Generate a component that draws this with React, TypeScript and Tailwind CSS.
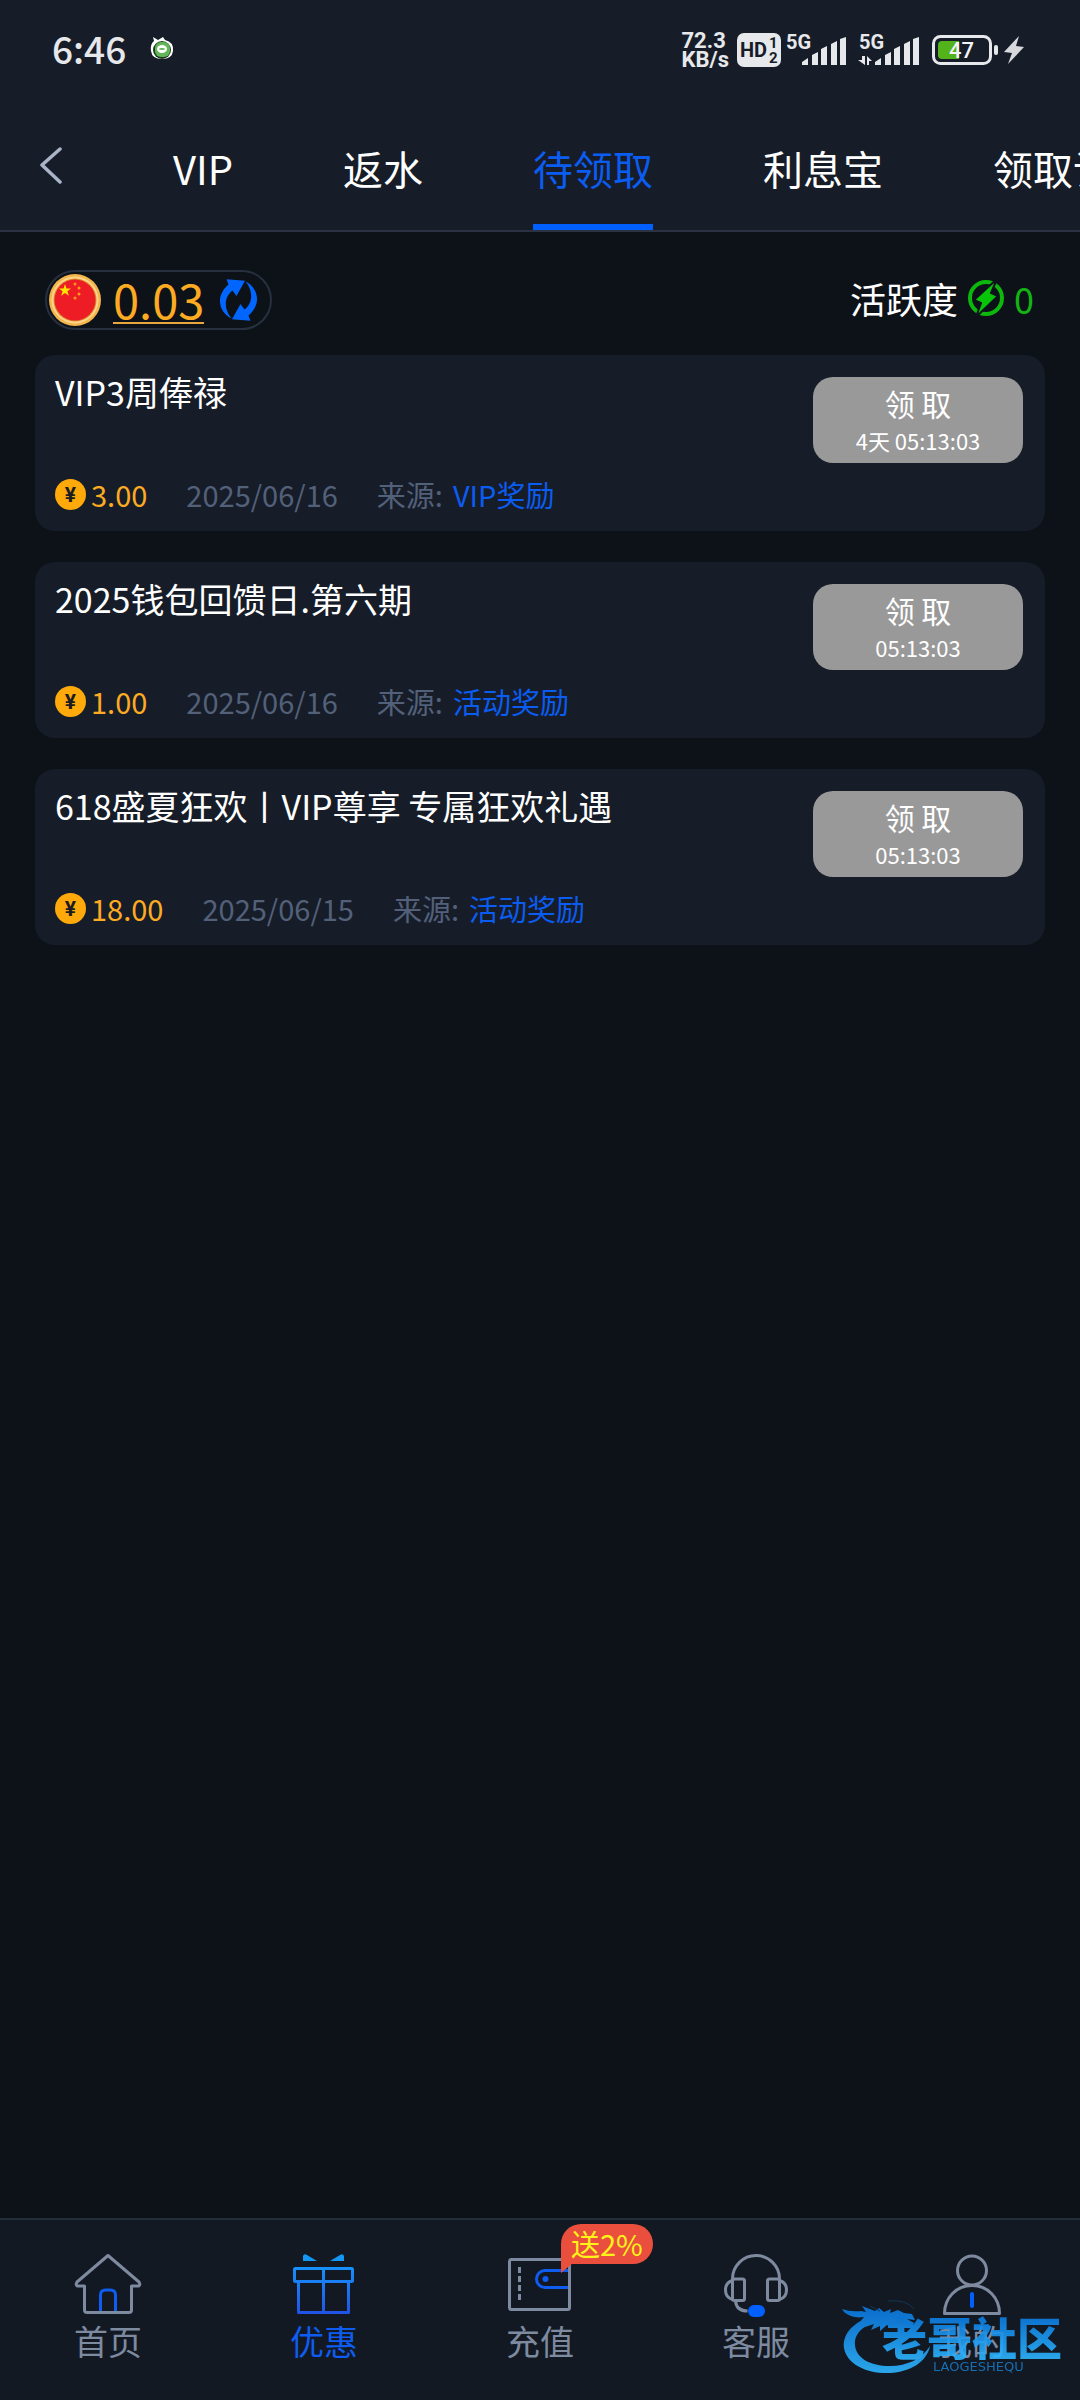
import React from 'react';

interface Reward {
  title: string;
  amount: string;
  date: string;
  source: string;
  countdown: string;
}

interface NavItem {
  label: string;
  icon: React.ReactNode;
  active?: boolean;
  badge?: string;
}

const tabs = ['VIP', '返水', '待领取', '利息宝', '领取记录'];
const activeTab = '待领取';

const rewards: Reward[] = [
  { title: 'VIP3周俸禄', amount: '3.00', date: '2025/06/16', source: 'VIP奖励', countdown: '4天 05:13:03' },
  { title: '2025钱包回馈日.第六期', amount: '1.00', date: '2025/06/16', source: '活动奖励', countdown: '05:13:03' },
  { title: '618盛夏狂欢丨VIP尊享 专属狂欢礼遇', amount: '18.00', date: '2025/06/15', source: '活动奖励', countdown: '05:13:03' },
];

const HdIcon: React.FC = () => (
  <svg className="w-11 h-[34px]" viewBox="0 0 44 34">
    <rect x="0" y="0" width="44" height="34" rx="7" fill="#e6e8eb" />
    <g fill="#171d28" fontFamily="Roboto, sans-serif" fontWeight="700">
      <text x="3" y="24" fontSize="20">HD</text>
      <text x="32" y="15" fontSize="15">1</text>
      <text x="32" y="30" fontSize="15">2</text>
    </g>
  </svg>
);

const SignalIcon: React.FC<{ data?: boolean }> = ({ data }) => (
  <svg className="w-[62px] h-8 overflow-visible" viewBox="0 0 62 32" fill="#e6e8eb">
    <text x="1" y="15" fontSize="20" fontFamily="Roboto, sans-serif" fontWeight="700">5G</text>
    {data && <path d="M4 22h3v9L0 26h4zM9 31V22l5 5h-3v4z" />}
    <path d="M17 31v-3l6-4v7z" />
    <path d="M27 31V21l6-3v13z" />
    <path d="M36 31V15l6-3v19z" />
    <path d="M46 31V10l6-3v24z" />
    <path d="M55 31V5l6-2v28z" />
  </svg>
);

const BatteryIcon: React.FC = () => (
  <svg className="w-[66px] h-[30px]" viewBox="0 0 66 30">
    <rect x="1.5" y="1.5" width="57" height="27" rx="7" fill="none" stroke="#e6e8eb" strokeWidth="3" />
    <path d="M10 6h17v18H10a4 4 0 0 1-4-4V10a4 4 0 0 1 4-4z" fill="#52b41a" />
    <rect x="62" y="10" width="4" height="10" rx="2" fill="#e6e8eb" />
    <text x="17" y="23" fontSize="22" fontFamily="Roboto, sans-serif" fontWeight="500" fill="#f3f4f6">47</text>
  </svg>
);

const StatusBar: React.FC = () => (
  <div className="flex items-center justify-between h-[100px] pl-[52px] pr-14">
    <div className="flex items-center gap-6 pb-1 text-[#e6e8eb]">
      <span className="text-[37px] leading-none font-medium">6:46</span>
      <svg className="w-6 h-6" viewBox="0 0 24 24">
        <path d="M3 1l5 3 5-3 2 3q9 2 8 11-1 8-11 8T1 15Q0 8 4 5z" fill="#fff" />
        <circle cx="12" cy="14" r="9" fill="#1f3b22" />
        <rect x="5" y="6" width="15" height="15" rx="6" fill="#62b558" />
        <ellipse cx="12" cy="13" rx="5" ry="4" fill="#fff" />
        <ellipse cx="12" cy="13" rx="3" ry="1" fill="#62b558" />
      </svg>
    </div>
    <div className="flex items-center text-[#e6e8eb]">
      <div className="mr-2 font-[Roboto,sans-serif] text-[22px] leading-[19px] font-bold">
        <div>72.3</div>
        <div>KB/s</div>
      </div>
      <HdIcon />
      <div className="flex gap-[11px] ml-1 mr-3">
        <SignalIcon />
        <SignalIcon data />
      </div>
      <BatteryIcon />
      <svg className="w-5 h-7 ml-1.5" viewBox="0 0 20 28" fill="#d6d8dc">
        <path d="M15 0L0 16l8 1-4 11L20 11l-8-1z" />
      </svg>
    </div>
  </div>
);

const Header: React.FC = () => (
  <header className="bg-[#171d28] border-b-2 border-[#2a3244]">
    <StatusBar />
    <div className="flex items-center h-[130px] pl-10 overflow-hidden">
      <button type="button" aria-label="返回" className="shrink-0">
        <svg className="w-6 h-10" viewBox="0 0 24 40" fill="none" stroke="#a9b4c8" strokeWidth="3.5" strokeLinecap="round" strokeLinejoin="round">
          <path d="M20 4L2 20l18 17" />
        </svg>
      </button>
      <nav className="flex gap-[110px] h-full ml-[109px]">
        {tabs.map((tab) => (
          <button
            key={tab}
            type="button"
            className={
              tab === activeTab
                ? 'shrink-0 h-full pt-3 whitespace-nowrap text-[40px] border-b-6 border-[#0060ff] text-[#0b5cf0]'
                : 'shrink-0 h-full pt-3 whitespace-nowrap text-[40px] border-b-6 border-transparent text-white'
            }
          >
            {tab}
          </button>
        ))}
      </nav>
    </div>
  </header>
);

const FlagCoin: React.FC = () => (
  <svg className="w-[52px] h-[52px]" viewBox="0 0 52 52">
    <circle cx="26" cy="26" r="26" fill="#f3b64c" />
    <circle cx="26" cy="26" r="23.5" fill="#fdd58a" />
    <circle cx="26" cy="26" r="21.5" fill="#d98a2b" />
    <circle cx="26" cy="26" r="20.5" fill="#ee1c25" />
    <path d="M16 10l1.500 4.500h4.500l-3.600 2.800 1.400 4.500-3.800-2.800-3.800 2.800 1.400-4.500-3.600-2.800h4.500z" fill="#ffe500" />
    <g fill="#ff9a1f">
      <circle cx="26" cy="10" r="1.500" />
      <circle cx="30" cy="14" r="1.500" />
      <circle cx="30" cy="20" r="1.500" />
      <circle cx="26" cy="24" r="1.500" />
    </g>
  </svg>
);

const refreshArrow = 'M8.600 .3L27 1.700 18.500 17l-4-5.500C6 18 5.500 30 13.500 39.500 2 34-4 18 10.500 5.500z';

const Balance: React.FC = () => (
  <div className="flex items-center justify-between pl-[45px] pr-[46px] pt-[38px] pb-[25px]">
    <div className="flex items-center h-[60px] pl-0.5 pr-2.5 rounded-full border-2 border-[#27303f]">
      <FlagCoin />
      <a href="#balance" className="ml-3 text-[47px] leading-[46px] text-[#fcab22] border-b-2 border-[#e8a63c]">0.03</a>
      <button type="button" aria-label="刷新" className="ml-3.5">
        <svg className="w-[42px] h-[42px]" viewBox="0 0 42 42" fill="#0066ff">
          <path d={refreshArrow} />
          <path d={refreshArrow} transform="rotate(180 20.500 21)" />
        </svg>
      </button>
    </div>
    <div className="flex items-center gap-2.5 pb-1 text-4xl text-white">
      <span>活跃度</span>
      <svg className="w-9 h-9 overflow-visible" viewBox="0 0 36 36">
        <circle cx="18" cy="18" r="16" fill="none" stroke="#0bb80b" strokeWidth="4" />
        <path d="M29-1L6 20l7 3-5 14 22-21-7-3z" fill="#08c408" stroke="#0e131b" strokeWidth="2" />
      </svg>
      <span className="text-[#14b314]">0</span>
    </div>
  </div>
);

const RewardCard: React.FC<{ reward: Reward }> = ({ reward }) => (
  <li className="flex justify-between h-44 pl-5 pr-[22px] rounded-[20px] bg-[#161d28]">
    <div className="flex flex-col justify-between pt-3.5 pb-[18px]">
      <h2 className="text-[34px] leading-[46px] text-white">{reward.title}</h2>
      <div className="flex items-center text-[29px] leading-[38px]">
        <svg className="w-[31px] h-[31px]" viewBox="0 0 31 31">
          <circle cx="15.500" cy="15.500" r="15.500" fill="#ffa90a" />
          <text x="15.500" y="23" textAnchor="middle" fontSize="21" fontFamily="Roboto, sans-serif" fontWeight="700" fill="#1b1d20">¥</text>
        </svg>
        <span className="ml-[5px] text-[#fcab22]">{reward.amount}</span>
        <time className="ml-[39px] text-[#53607a]">{reward.date}</time>
        <span className="ml-[39px] text-[#53607a]">来源:</span>
        <a href="#source" className="ml-2.5 text-[#0b5cf0]">{reward.source}</a>
      </div>
    </div>
    <button type="button" className="flex flex-col items-center justify-center w-[210px] h-[86px] mt-[22px] rounded-[20px] bg-[#999999] text-white">
      <span className="text-[30px] leading-[40px]">领 取</span>
      <span className="text-[22px] leading-[34px]">{reward.countdown}</span>
    </button>
  </li>
);

const HomeIcon: React.FC = () => (
  <svg className="w-[72px] h-[66px]" viewBox="0 0 72 66" fill="none" stroke="#7e8aa0" strokeWidth="3" strokeLinejoin="round">
    <path d="M36 3.500L5 30q-2 4 1 4h6.500v24q0 2.500 2.500 2.500h42q2.500 0 2.500-2.500V34H66q3 0 1-4z" />
    <path d="M28.500 59V43q0-5 5-5h5q5 0 5 5v16" stroke="#0f5cf0" />
  </svg>
);

const GiftIcon: React.FC = () => (
  <svg className="w-[72px] h-[66px]" viewBox="0 0 72 66" fill="none" strokeWidth="3" strokeLinejoin="round">
    <defs>
      <linearGradient id="gift" gradientUnits="userSpaceOnUse" x1="0" y1="4" x2="0" y2="62">
        <stop offset="0" stopColor="#14a0ff" />
        <stop offset="1" stopColor="#2152e6" />
      </linearGradient>
    </defs>
    <g stroke="url(#gift)">
      <rect x="6.500" y="16.500" width="58" height="13" rx="1" />
      <path d="M10.500 29.500v31h50v-31M35.500 16.500v44" />
    </g>
    <path d="M15 9V4q1-3 4-1l10 6zM56 9V4q-1-3-4-1L42 9z" fill="#1496f5" />
  </svg>
);

const WalletIcon: React.FC = () => (
  <svg className="w-[72px] h-[66px]" viewBox="0 0 72 66" fill="none" stroke="#7e8aa0" strokeWidth="3" strokeLinejoin="round">
    <path d="M64 18.500H41a8.500 8.500 0 0 0 0 17h23" stroke="#0f5cf0" />
    <rect x="5.500" y="7.500" width="60" height="50" rx="2" />
    <path d="M15.500 15v34" strokeDasharray="6 3" />
    <circle cx="41.500" cy="27" r="3" fill="#0f5cf0" stroke="none" />
  </svg>
);

const HeadsetIcon: React.FC = () => (
  <svg className="w-[72px] h-[66px]" viewBox="0 0 72 66" fill="none" stroke="#7e8aa0" strokeWidth="3">
    <path d="M12.500 30v-3a23.500 23.500 0 0 1 47 0v3" />
    <rect x="12.500" y="27" width="12" height="21.500" rx="2" />
    <rect x="47.500" y="27" width="12" height="21.500" rx="2" />
    <path d="M12.500 28.500q-7 2-7 9.500t7 9.500M59.500 28.500q7 2 7 9.500t-7 9.500M15.500 49q1 10 12 10" />
    <rect x="28" y="53" width="17" height="12" rx="6" fill="#0060ff" stroke="none" />
  </svg>
);

const UserIcon: React.FC = () => (
  <svg className="w-[72px] h-[66px]" viewBox="0 0 72 66" fill="none" stroke="#7e8aa0" strokeWidth="3" strokeLinejoin="round">
    <circle cx="36" cy="18.500" r="14.500" />
    <path d="M8.500 61.500C8.500 46 20 33.500 36 33.500S63.500 46 63.500 61.500z" />
    <path d="M36 42v12" stroke="#0060ff" strokeWidth="4" strokeLinecap="round" />
  </svg>
);

const navItems: NavItem[] = [
  { label: '首页', icon: <HomeIcon /> },
  { label: '优惠', icon: <GiftIcon />, active: true },
  { label: '充值', icon: <WalletIcon />, badge: '送2%' },
  { label: '客服', icon: <HeadsetIcon /> },
  { label: '我的', icon: <UserIcon /> },
];

const Watermark: React.FC = () => (
  <div className="absolute right-4 bottom-6 w-[222px] h-[76px] pointer-events-none opacity-90">
    <svg className="w-[92px] h-[76px]" viewBox="0 0 92 76">
      <defs>
        <linearGradient id="dragon" gradientUnits="userSpaceOnUse" x1="0" y1="8" x2="0" y2="74">
          <stop offset="0" stopColor="#0a78e0" />
          <stop offset="1" stopColor="#2fb6ff" />
        </linearGradient>
      </defs>
      <g fill="url(#dragon)">
        <path d="M34 16C12 20 0 34 2 48c3 17 24 26 46 25 20-1 37-11 40-27-8 13-23 20-40 20-20 0-34-8-35-21-1-12 9-20 24-24z" />
        <path d="M0 9q8 3 19 2l5 1-4-6 13 5 4-3 5 4 7-3-1 4 8-3 6 3 8 1 3 6-8-1 7 4-3 5-9-3-7 3-8-3-7 6v-5l-9 4 3-6-9 3 5-7-11 3 5-6q-12 2-20-5z" />
      </g>
      <path d="M28 6l10 5M46 1q18-2 26 8" fill="none" stroke="#123a5a" strokeWidth="1" />
    </svg>
    <div className="absolute left-10 top-3.5 font-black text-[45px] leading-[46px] whitespace-nowrap bg-linear-to-b from-[#0a78e0] to-[#2fb6ff] bg-clip-text text-transparent">老哥社区</div>
    <div className="absolute left-[91px] top-[59px] font-['DejaVu_Sans',sans-serif] text-[13px] leading-4 text-[#1878c0]">LAOGESHEQU</div>
  </div>
);

const BottomNav: React.FC = () => (
  <nav className="relative grid grid-cols-5 h-[182px] pt-8 border-t-2 border-[#232d3a] bg-[#121922]">
    {navItems.map((item) => (
      <a key={item.label} href="#nav" className="relative flex flex-col items-center">
        {item.icon}
        <span className={item.active ? 'text-[34px] leading-[46px] text-[#0f5cf0]' : 'text-[34px] leading-[46px] text-[#7e8aa0]'}>
          {item.label}
        </span>
        {item.badge && (
          <span className="absolute left-1/2 -top-7 ml-[21px] h-10 px-2.5 rounded-[20px] rounded-bl-none bg-[#ea4f3d] text-[29px] leading-[38px] whitespace-nowrap text-[#fff31a]">
            {item.badge}
            <svg className="absolute left-0 top-[39px] w-3 h-2.5" viewBox="0 0 12 10" fill="#ea4f3d">
              <path d="M0 0h12L0 10z" />
            </svg>
          </span>
        )}
      </a>
    ))}
    <Watermark />
  </nav>
);

const App: React.FC = () => {
  return (
    <div className="flex flex-col min-h-screen bg-[#0d1219] font-['Noto_Sans_CJK_SC',sans-serif]">
      <Header />
      <main className="flex-1">
        <Balance />
        <ul className="flex flex-col gap-[31px] px-[35px]">
          {rewards.map((reward) => (
            <RewardCard key={reward.title} reward={reward} />
          ))}
        </ul>
      </main>
      <BottomNav />
    </div>
  );
};

export default App;
